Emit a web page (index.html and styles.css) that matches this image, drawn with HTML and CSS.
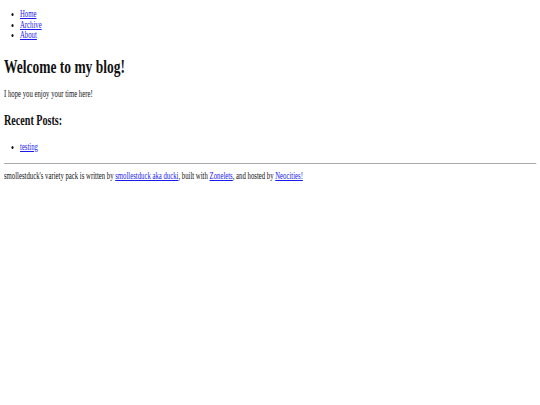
FILE: index.html
```html
<!DOCTYPE html>
<html lang="en">
<head>
<meta charset="utf-8">
<title>smollestduck's variety pack</title>
<link rel="stylesheet" href="styles.css">
</head>
<body>
<div class="frame">
<div class="container">
  <header class="header">
    <ul class="nav">
      <li><a href="#">Home</a></li>
      <li><a href="#">Archive</a></li>
      <li><a href="#">About</a></li>
    </ul>
  </header>
  <main class="content">
    <h1 class="title">Welcome to my blog!</h1>
    <p class="intro">I hope you enjoy your time here!</p>
    <h2 class="subtitle">Recent Posts:</h2>
    <ul class="recent">
      <li><a href="#">testing</a></li>
    </ul>
  </main>
  <footer class="footer">
    <hr class="rule">
    <p class="credits">smollestduck's variety pack is written by <a href="#">smollestduck aka ducki</a>, built with <a href="#">Zonelets</a>, and hosted by <a href="#">Neocities!</a></p>
  </footer>
</div>
</div>
</body>
</html>
```
FILE: styles.css
```css
html {
  background: #ffffff;
  overflow: hidden;
}

body {
  margin: 0;
  font-family: "Liberation Serif", "Times New Roman", serif;
  font-size: 9.44px;
  line-height: 10.5px;
  color: #111111;
  background: #ffffff;
}

.frame {
  width: 540px;
  overflow: hidden;
}

/* the page is shown horizontally condensed, as in the reference capture */
.container {
  width: 755.2px;
  box-sizing: border-box;
  padding: 0 5.6px;
  transform: scaleX(0.715);
  transform-origin: 0 0;
}

a {
  color: #1a1aee;
  text-decoration: underline;
}

.header {
  padding-top: 9.4px;
}

.nav,
.recent {
  margin: 0;
  padding-left: 22.4px;
}

.title {
  margin: 16.6px 0 11.6px;
  font-size: 18.88px;
  line-height: 20px;
  font-weight: bold;
}

.intro {
  margin: 0;
}

.subtitle {
  margin: 12.5px 0 14px;
  font-size: 14.16px;
  line-height: 16px;
  font-weight: bold;
}

.rule {
  height: 0;
  margin: 10.5px 0 7px;
  border: 0;
  border-top: 1px solid #a8a8a8;
}

.credits {
  margin: 0;
}
```
